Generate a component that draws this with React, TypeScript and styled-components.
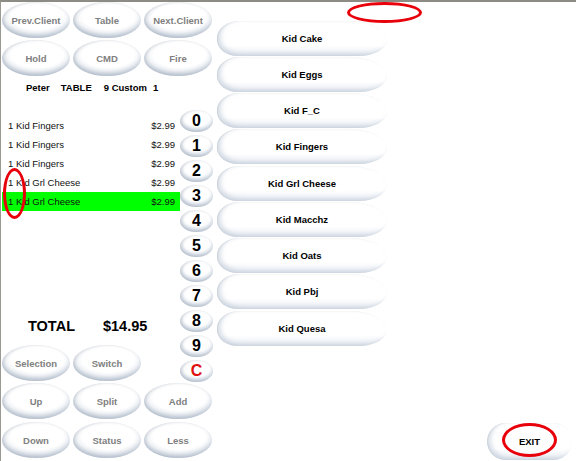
import styled, { createGlobalStyle } from 'styled-components'

const GlobalStyle = createGlobalStyle`
  html, body { margin: 0; padding: 0; background: #fff; }
  body { font-family: "Liberation Sans", Arial, sans-serif; }
`

interface OrderLine {
  qty: number
  name: string
  price: string
  selected?: boolean
}

const order: OrderLine[] = [
  { qty: 1, name: 'Kid Fingers', price: '$2.99' },
  { qty: 1, name: 'Kid Fingers', price: '$2.99' },
  { qty: 1, name: 'Kid Fingers', price: '$2.99' },
  { qty: 1, name: 'Kid Grl Cheese', price: '$2.99' },
  { qty: 1, name: 'Kid Grl Cheese', price: '$2.99', selected: true },
]

const menuItems = ['Kid Cake', 'Kid Eggs', 'Kid F_C', 'Kid Fingers', 'Kid Grl Cheese', 'Kid Macchz', 'Kid Oats', 'Kid Pbj', 'Kid Quesa']

const keys = ['0', '1', '2', '3', '4', '5', '6', '7', '8', '9', 'C']

const Screen = styled.div`
  position: relative;
  width: 576px;
  height: 461px;
  box-sizing: border-box;
  border-top: 2px solid #8c8c84;
  border-left: 1px solid #9a9a92;
  display: flex;
  overflow: hidden;
`

const LeftPane = styled.div`
  width: 215px;
  display: flex;
  flex-direction: column;
`

const ButtonGrid = styled.div`
  display: grid;
  grid-template-columns: repeat(3, 68px);
  grid-auto-rows: 36px;
  column-gap: 3px;
  row-gap: 2px;
  padding-left: 1px;
`

// oval glossy button used all over the left side
const OvalButton = styled.div`
  display: flex;
  align-items: center;
  justify-content: center;
  border-radius: 50%;
  background: radial-gradient(ellipse 62% 58% at 52% 40%, #ffffff 62%, #f1f3f6 78%, #dde1e7 92%, #cdd3db 100%);
  box-shadow: inset 0 -3px 4px rgba(150, 168, 192, 0.35), inset 2px 0 3px rgba(190, 196, 204, 0.5);
  font-size: 9.5px;
  font-weight: bold;
  color: #808080;
  user-select: none;
`

const Info = styled.div`
  margin-top: 6px;
  padding-left: 25px;
  height: 12px;
  line-height: 12px;
  font-size: 9.5px;
  font-weight: bold;
  color: #000;
  display: flex;
`

const InfoPart = styled.span<{ $gap: number }>`
  margin-left: ${p => p.$gap}px;
`

const Middle = styled.div`
  display: flex;
`

const OrderCol = styled.div`
  width: 179px;
  display: flex;
  flex-direction: column;
`

const OrderList = styled.div`
  margin-top: 22px;
  margin-left: 1px;
  width: 178px;
  display: flex;
  flex-direction: column;
`

const OrderRow = styled.div<{ $selected?: boolean }>`
  height: 19px;
  display: flex;
  align-items: center;
  justify-content: space-between;
  padding: 0 5px 0 6px;
  font-size: 9.5px;
  color: #111;
  background: ${p => (p.$selected ? '#00ff00' : 'transparent')};
`

const Total = styled.div`
  margin-top: 106px;
  padding-left: 27px;
  height: 18px;
  line-height: 18px;
  font-size: 14.5px;
  font-weight: bold;
  display: flex;
  gap: 28px;
`

const SelectionRow = styled(ButtonGrid)`
  margin-top: 10px;
`

const Numpad = styled.div`
  padding-top: 16px;
  display: flex;
  flex-direction: column;
  gap: 3px;
`

const Key = styled(OvalButton)<{ $red?: boolean }>`
  width: 33px;
  height: 22px;
  font-size: 16px;
  color: ${p => (p.$red ? '#e01010' : '#000')};
`

const BottomGrid = styled(ButtonGrid)`
  margin-top: 1px;
  row-gap: 3px;
`

const MenuCol = styled.div`
  width: 170px;
  margin-left: 1px;
  padding-top: 18.5px;
  display: flex;
  flex-direction: column;
  gap: 1.25px;
`

const MenuButton = styled.div`
  height: 35px;
  display: flex;
  align-items: center;
  justify-content: center;
  border-radius: 24px 40px 30px 22px / 18px 20px 17px 17px;
  background: linear-gradient(180deg, #ffffff 0%, #ffffff 70%, #f0f3f7 88%, #dfe5ec 100%);
  box-shadow: inset 4px -2px 4px rgba(175, 188, 206, 0.45), inset 1px 0 1px rgba(200, 205, 212, 0.6);
  font-size: 9.5px;
  font-weight: bold;
  color: #000;
`

const RightSide = styled.div`
  flex: 1;
  display: flex;
  align-items: flex-end;
  justify-content: flex-end;
  padding: 0 4px 1px 0;
`

const ExitButton = styled(MenuButton)`
  width: 85px;
  height: 37px;
  border-radius: 20px;
`

const Mark = styled.div<{ $x: number; $y: number; $w: number; $h: number }>`
  position: absolute;
  left: ${p => p.$x}px;
  top: ${p => p.$y}px;
  width: ${p => p.$w}px;
  height: ${p => p.$h}px;
  box-sizing: border-box;
  border: 3.5px solid #e8000b;
  border-radius: 50%;
  pointer-events: none;
`

export default function App() {
  return (
    <>
      <GlobalStyle />
      <Screen>
        <LeftPane>
          <ButtonGrid>
            <OvalButton>Prev.Client</OvalButton>
            <OvalButton>Table</OvalButton>
            <OvalButton>Next.Client</OvalButton>
            <OvalButton>Hold</OvalButton>
            <OvalButton>CMD</OvalButton>
            <OvalButton>Fire</OvalButton>
          </ButtonGrid>
          <Info>
            <InfoPart $gap={0}>Peter</InfoPart>
            <InfoPart $gap={11}>TABLE</InfoPart>
            <InfoPart $gap={12}>9 Custom</InfoPart>
            <InfoPart $gap={6}>1</InfoPart>
          </Info>
          <Middle>
            <OrderCol>
              <OrderList>
                {order.map((line, i) => (
                  <OrderRow key={i} $selected={line.selected}>
                    <span>
                      {line.qty} {line.name}
                    </span>
                    <span>{line.price}</span>
                  </OrderRow>
                ))}
              </OrderList>
              <Total>
                <span>TOTAL</span>
                <span>$14.95</span>
              </Total>
              <SelectionRow>
                <OvalButton>Selection</OvalButton>
                <OvalButton>Switch</OvalButton>
              </SelectionRow>
            </OrderCol>
            <Numpad>
              {keys.map(k => (
                <Key key={k} $red={k == 'C'}>
                  {k}
                </Key>
              ))}
            </Numpad>
          </Middle>
          <BottomGrid>
            <OvalButton>Up</OvalButton>
            <OvalButton>Split</OvalButton>
            <OvalButton>Add</OvalButton>
            <OvalButton>Down</OvalButton>
            <OvalButton>Status</OvalButton>
            <OvalButton>Less</OvalButton>
          </BottomGrid>
        </LeftPane>
        <MenuCol>
          {menuItems.map(item => (
            <MenuButton key={item}>{item}</MenuButton>
          ))}
        </MenuCol>
        <RightSide>
          <ExitButton>EXIT</ExitButton>
        </RightSide>
        <Mark $x={346} $y={0} $w={75} $h={21} />
        <Mark $x={2} $y={166} $w={23} $h={51} />
        <Mark $x={501} $y={421} $w={55} $h={34} />
      </Screen>
    </>
  )
}
